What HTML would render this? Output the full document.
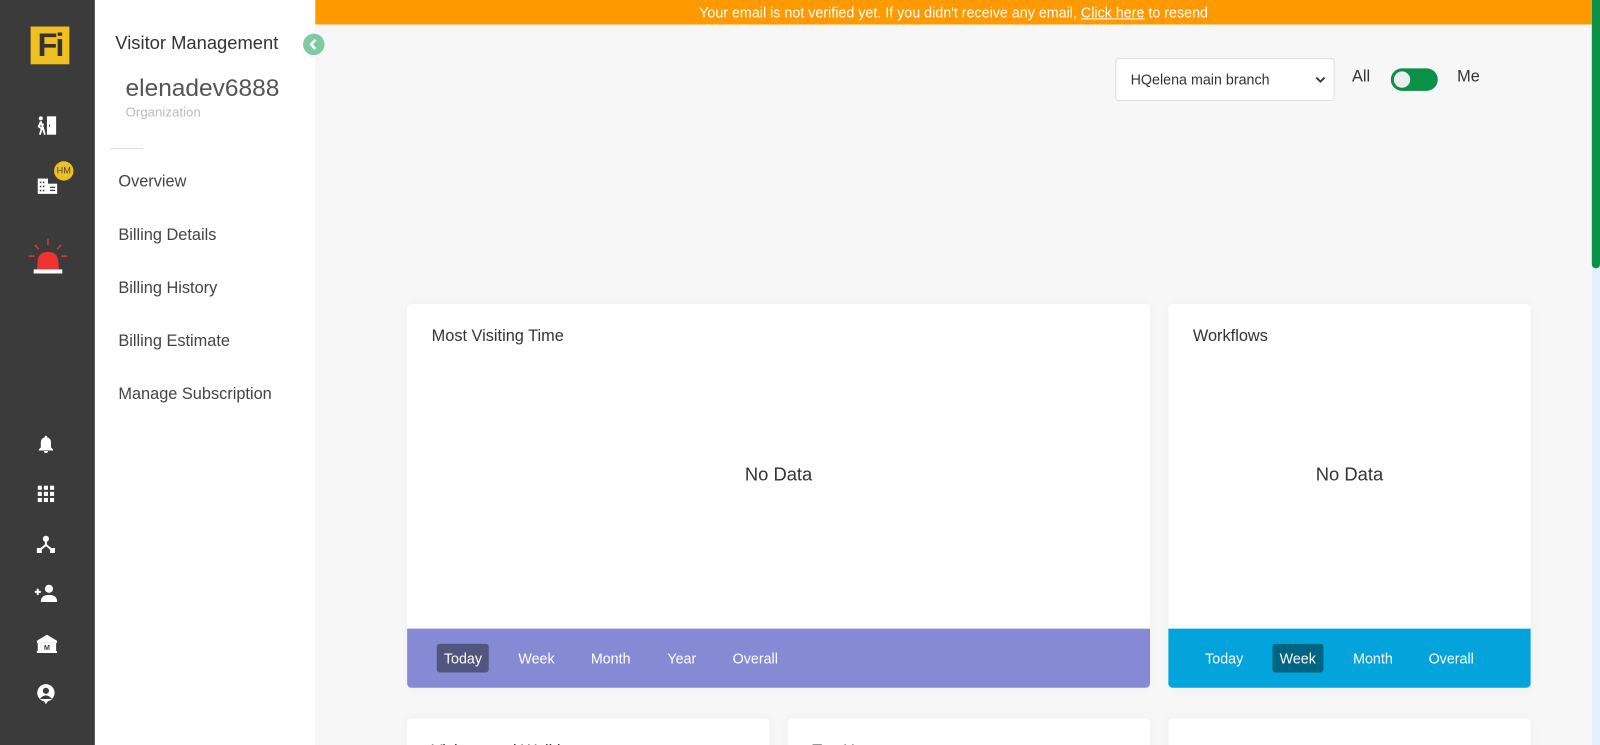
<!DOCTYPE html>
<html><head><meta charset="utf-8"><style>
*{box-sizing:border-box;margin:0;padding:0}
html,body{width:1600px;height:745px;overflow:hidden;background:#f7f7f7}
body{font-family:"Liberation Sans",Arial,sans-serif;position:relative}
#w{position:absolute;left:0;top:0;width:1568px;height:730px;transform:scale(1.02041);transform-origin:0 0}
.rail{position:absolute;left:0;top:0;width:93px;height:745px;background:#3b3b3b}
.side{position:absolute;left:93px;top:0;width:216px;height:745px;background:#fff}
.main{position:absolute;left:309px;top:0;width:1251px;height:745px;background:#f7f7f7;overflow:hidden}
.banner{position:absolute;left:309px;top:0;width:1251px;height:24px;background:#ff9900;color:#fff;font-size:14px;text-align:center;line-height:24px}
.ico{position:absolute;left:36px}
.side .nav{position:absolute;left:23px;font-size:16px;color:#444}
.card{position:absolute;background:#fff;border-radius:4px;box-shadow:0 0 12px rgba(0,0,0,.04)}
.card h3{position:absolute;left:24px;top:23px;font-size:16px;font-weight:normal;color:#333}
.nd{position:absolute;width:100%;text-align:center;top:157px;font-size:18px;color:#333}
.bar{position:absolute;left:0;bottom:0;width:100%;height:58px;border-radius:0 0 4px 4px}
.bar span{position:absolute;top:15px;height:28px;line-height:28px;color:#fff;font-size:14px;padding:0 7px;border-radius:3px}
</style></head><body><div id="w">
<div class="rail">
 <div style="position:absolute;left:30px;top:26px;width:38px;height:37px;background:#f0c020;color:#333;font-weight:bold;font-size:32px;line-height:37px;text-align:center;letter-spacing:-2px">Fi</div>
 <svg class="ico" style="top:113px" width="22" height="20" viewBox="0 0 22 20"><rect x="10" y="1" width="9" height="18" fill="#fff"/><rect x="12" y="9" width="1" height="2" fill="#3b3b3b"/><circle cx="4" cy="3" r="2" fill="#fff"/><path d="M4 6 L2 11 L5 13 L3 19 M4 6 L6 12 L8 19 M2 9 L7 9" stroke="#fff" stroke-width="1.8" fill="none"/></svg>
 <svg class="ico" style="top:173px" width="22" height="18" viewBox="0 0 22 18"><rect x="1" y="2" width="10" height="15" fill="#fff"/><rect x="11" y="7" width="9" height="10" fill="#fff"/><g fill="#3b3b3b"><rect x="3" y="5" width="1.5" height="1.5"/><rect x="6" y="5" width="1.5" height="1.5"/><rect x="3" y="9" width="1.5" height="1.5"/><rect x="6" y="9" width="1.5" height="1.5"/><rect x="3" y="13" width="1.5" height="1.5"/><rect x="6" y="13" width="1.5" height="1.5"/><rect x="13" y="10" width="5" height="1.2"/><rect x="13" y="13" width="5" height="1.2"/></g></svg>
 <div style="position:absolute;left:53px;top:158px;width:19px;height:19px;border-radius:50%;background:#f0c020;color:#444;font-size:9px;line-height:19px;text-align:center">HM</div>
 <svg style="position:absolute;left:27px;top:233px" width="40" height="36" viewBox="0 0 40 36"><path d="M9 32 L10 22 Q11 14 20 14 Q29 14 30 22 L31 32Z" fill="#e33"/><rect x="6" y="31" width="28" height="4" fill="#fff"/><g stroke="#e33" stroke-width="1.5"><path d="M20 1v6M7 7l4 4M33 7l-4 4M1 18h6M33 18h6"/></g></svg>
 <svg class="ico" style="top:426px" width="18" height="18" viewBox="0 0 18 18"><path d="M9 1a1 1 0 0 1 1 1.5 5 5 0 0 1 4 5v5l2 2v1H2v-1l2-2v-5a5 5 0 0 1 4-5A1 1 0 0 1 9 1z M7 16h4a2 2 0 0 1-4 0z" fill="#fff"/></svg>
 <svg class="ico" style="top:475px" width="18" height="18" viewBox="0 0 18 18"><g fill="#fff"><rect x="1" y="1" width="4" height="4"/><rect x="7" y="1" width="4" height="4"/><rect x="13" y="1" width="4" height="4"/><rect x="1" y="7" width="4" height="4"/><rect x="7" y="7" width="4" height="4"/><rect x="13" y="7" width="4" height="4"/><rect x="1" y="13" width="4" height="4"/><rect x="7" y="13" width="4" height="4"/><rect x="13" y="13" width="4" height="4"/></g></svg>
 <svg class="ico" style="top:524px" width="18" height="18" viewBox="0 0 18 18"><circle cx="9" cy="4" r="3" fill="#fff"/><path d="M9 6v4L3 15M9 10l6 5" stroke="#fff" stroke-width="2" fill="none"/><rect x="0" y="13" width="5" height="5" fill="#fff"/><rect x="13" y="13" width="5" height="5" fill="#fff"/></svg>
 <svg style="position:absolute;left:34px;top:572px" width="22" height="18" viewBox="0 0 22 18"><path d="M0 8h6M3 5v6" stroke="#fff" stroke-width="2"/><circle cx="14" cy="5" r="4" fill="#fff"/><path d="M6 18q0-7 8-7t8 7z" fill="#fff"/></svg>
 <svg class="ico" style="top:622px" width="20" height="18" viewBox="0 0 20 18"><path d="M10 0L0 6v2h20V6z" fill="#fff"/><rect x="1" y="8" width="18" height="8" fill="#fff"/><rect x="0" y="16" width="20" height="2" fill="#fff"/><text x="10" y="15" font-size="7" text-anchor="middle" fill="#3b3b3b" font-family="Liberation Sans" font-weight="bold">M</text></svg>
 <svg class="ico" style="top:670px" width="18" height="20" viewBox="0 0 18 20"><circle cx="9" cy="9" r="8.5" fill="#fff"/><circle cx="9" cy="7" r="3" fill="#3b3b3b"/><path d="M3 15q6-7 12 0z" fill="#3b3b3b"/><path d="M7 17l2 3 2-3z" fill="#fff"/></svg>
</div>
<div class="side">
 <div style="position:absolute;left:20px;top:32px;font-size:18px;color:#333">Visitor Management</div>
 <div style="position:absolute;left:30px;top:73px;font-size:24px;color:#555">elenadev6888</div>
 <div style="position:absolute;left:30px;top:102px;font-size:13px;color:#bbb">Organization</div>
 <div style="position:absolute;left:15px;top:145px;width:32px;height:1px;background:#ddd"></div>
 <div class="nav" style="top:170px">Overview</div>
 <div class="nav" style="top:222px">Billing Details</div>
 <div class="nav" style="top:274px">Billing History</div>
 <div class="nav" style="top:326px">Billing Estimate</div>
 <div class="nav" style="top:378px">Manage Subscription</div>
 <div style="position:absolute;left:204px;top:33px;width:21px;height:21px;border-radius:50%;background:#7ecba1;z-index:5"><svg width="21" height="21" viewBox="0 0 21 21"><path d="M12 6l-4 4.5 4 4.5" stroke="#fff" stroke-width="2.5" fill="none"/></svg></div>
</div>
<div class="main">
 <div style="position:absolute;left:784px;top:57px;width:215px;height:42px;background:#fff;border:1px solid #ddd;border-radius:3px;font-size:14px;color:#333;line-height:40px;padding-left:14px">HQelena main branch<svg style="position:absolute;right:8px;top:16px" width="10" height="8" viewBox="0 0 10 8"><path d="M1 2l4 4 4-4" stroke="#333" stroke-width="1.8" fill="none"/></svg></div>
 <div style="position:absolute;left:1016px;top:67px;font-size:16px;color:#333">All</div>
 <div style="position:absolute;left:1054px;top:67px;width:46px;height:22px;border-radius:11px;background:#0a9148"><div style="position:absolute;left:3px;top:3px;width:16px;height:16px;border-radius:50%;background:#eee"></div></div>
 <div style="position:absolute;left:1119px;top:67px;font-size:16px;color:#333">Me</div>
 <div class="card" style="left:90px;top:298px;width:728px;height:376px"><h3>Most Visiting Time</h3><div class="nd">No Data</div>
  <div class="bar" style="background:#8689d4"><span style="left:29px;background:#52567f">Today</span><span style="left:102px">Week</span><span style="left:173px">Month</span><span style="left:248px">Year</span><span style="left:312px">Overall</span></div></div>
 <div class="card" style="left:836px;top:298px;width:355px;height:376px"><h3>Workflows</h3><div class="nd">No Data</div>
  <div class="bar" style="background:#02a4db"><span style="left:29px">Today</span><span style="left:102px;background:#006582">Week</span><span style="left:174px">Month</span><span style="left:248px">Overall</span></div></div>
 <div class="card" style="left:90px;top:704px;width:355px;height:60px"><h3 style="top:24px">Visitors and Walkins</h3></div>
 <div class="card" style="left:463px;top:704px;width:355px;height:60px"><h3 style="top:24px">Top Hosts</h3></div>
 <div class="card" style="left:836px;top:704px;width:355px;height:60px"></div>
</div>
<div class="banner">Your email is not verified yet. If you didn't receive any email, <u>Click here</u> to resend</div>
<div style="position:absolute;left:1560px;top:0;width:8px;height:745px;background:#e3f0fa"><div style="width:8px;height:263px;background:#0a9148;border-radius:0 0 4px 4px"></div></div>
</div></body></html>
